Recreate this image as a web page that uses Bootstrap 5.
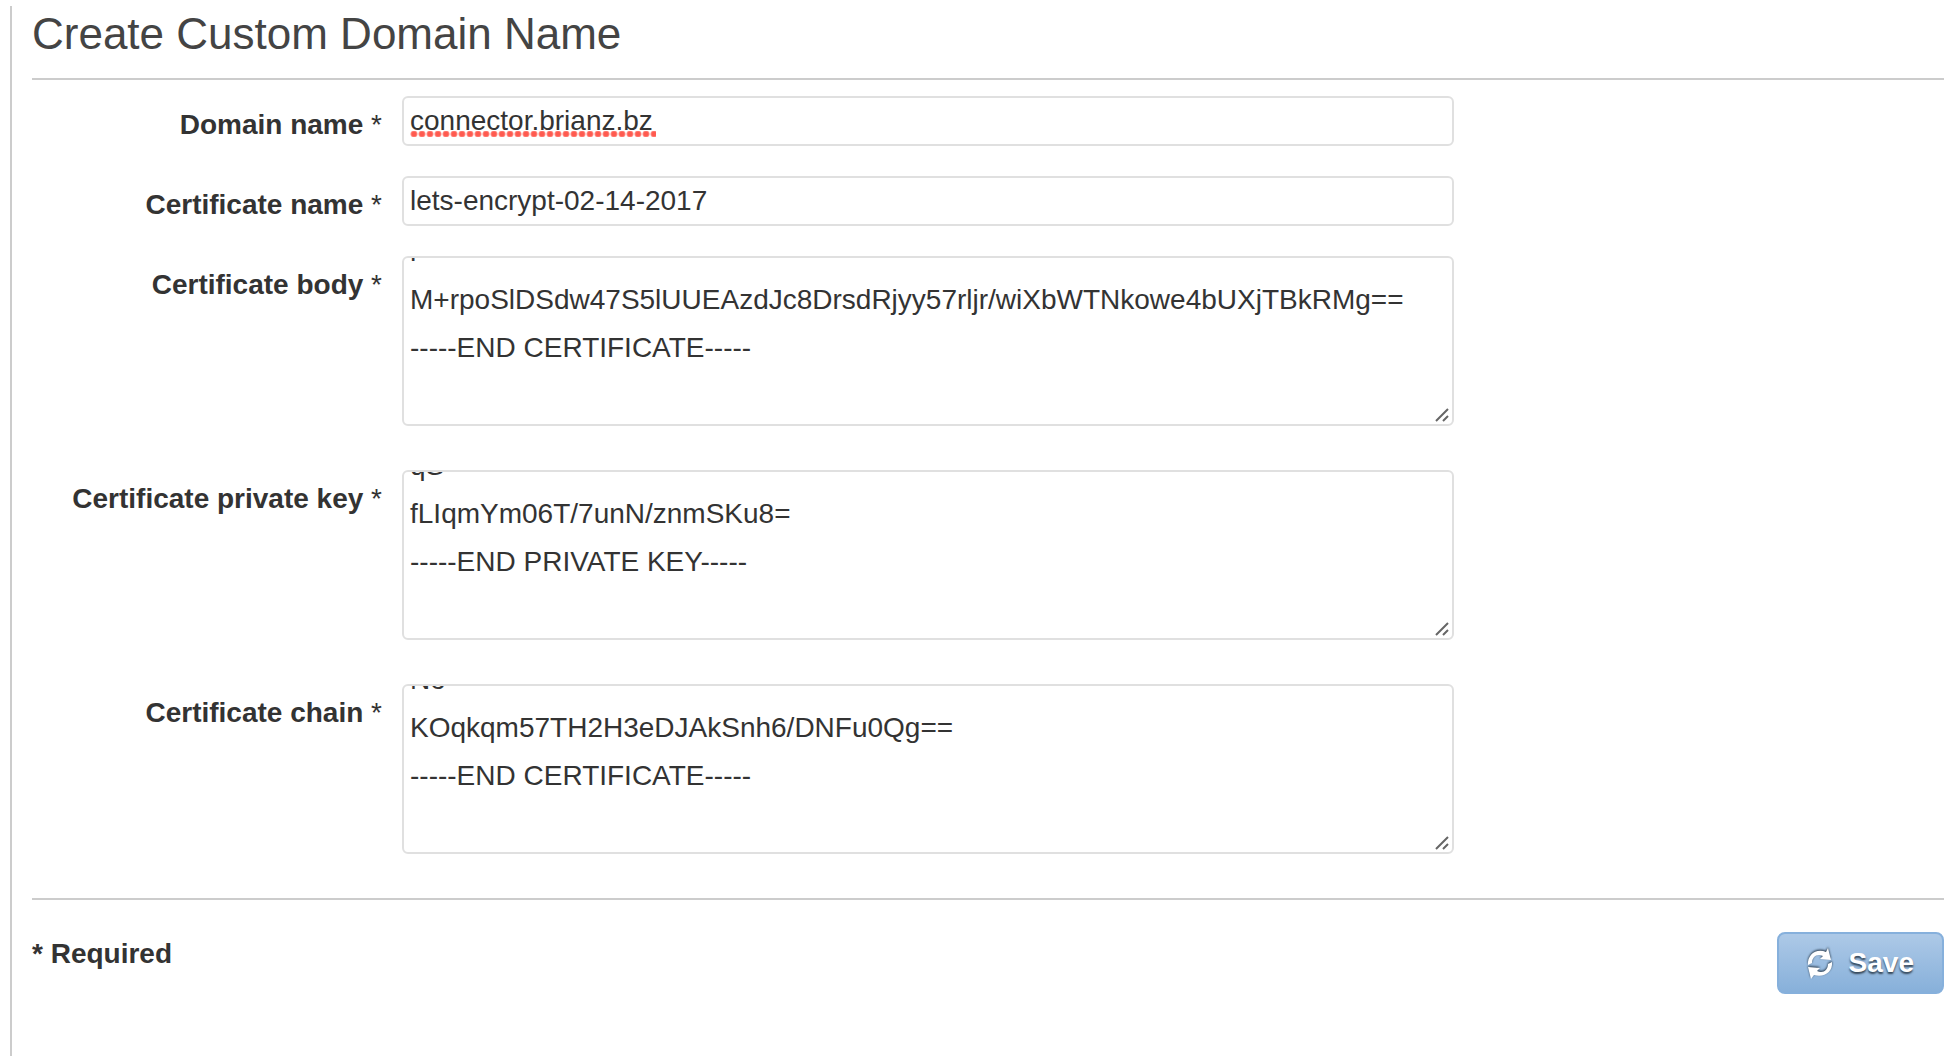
<!DOCTYPE html>
<html lang="en">
<head>
<meta charset="utf-8">
<meta name="viewport" content="width=device-width, initial-scale=1">
<title>Create Custom Domain Name</title>
<link href="https://cdn.jsdelivr.net/npm/bootstrap@5.3.0/dist/css/bootstrap.min.css" rel="stylesheet">
<style>
  body { font-family: "Liberation Sans", Arial, sans-serif; font-size: 28px; line-height: 48px; color: #333; background: #fff; }
  .panel-main { border-left: 2px solid #ccc; margin: 6px 12px 0 10px; padding-left: 20px; min-height: calc(100vh - 6px); }
  .panel-title { font-size: 44px; line-height: 56px; color: #444; padding-bottom: 16px; border-bottom: 2px solid #ccc; }
  .field-row { display: grid; grid-template-columns: 350px minmax(0, 55%); column-gap: 20px; margin-bottom: 30px; }
  .area-row { margin-bottom: 44px; }
  .field-label { font-weight: 700; text-align: right; line-height: 42px; padding-top: 8px; }
  .field-label span { font-weight: 400; }
  .field-box.form-control { font-size: 28px; line-height: 48px; color: #333; border: 2px solid #e0e0e0; border-radius: 6px; padding: 4px 6px; }
  input.field-box.form-control { height: 50px; padding-top: 0; padding-bottom: 0; line-height: 40px; }
  textarea.field-box.form-control { height: 170px; overflow: hidden; resize: none; }
  /* dotted spelling underline below the host name */
  input.field-box.misspelt {
    background-image: linear-gradient(#fff, #fff), radial-gradient(circle at 4px 3px, #ff5a4f 2px, #ff8b83 3px, transparent 4px);
    background-repeat: no-repeat, repeat-x;
    background-size: 100% 100%, 8px 6px;
    background-position: 252px 0, 6px 33px;
    background-clip: content-box;
  }
  .grip { right: 5px; bottom: 4px; width: 14px; height: 14px; }
  .panel-foot { border-top: 2px solid #ccc; padding-top: 32px; }
  .required-note { line-height: 44px; }
  .btn-save { font-size: 28px; font-weight: 700; line-height: 58px; color: #fff; padding: 0 28px; border: 2px solid #86b0dc; border-radius: 8px; background: linear-gradient(#adc9e7, #87b0da); text-shadow: 0 2px 2px #345; gap: 16px; }
  .btn-save svg { width: 26px; height: 32px; overflow: visible; filter: drop-shadow(0 -1px 1px #234); }
</style>
</head>
<body>
<main class="panel-main">
  <h1 class="panel-title fw-normal mb-0">Create Custom Domain Name</h1>
  <form>
    <div class="d-flex flex-column pt-3">
      <div class="field-row">
        <label class="field-label" for="domain">Domain name <span>*</span></label>
        <input class="form-control field-box misspelt" id="domain" type="text" value="connector.brianz.bz" spellcheck="false" required>
      </div>
      <div class="field-row">
        <label class="field-label" for="certname">Certificate name <span>*</span></label>
        <input class="form-control field-box" id="certname" type="text" value="lets-encrypt-02-14-2017" spellcheck="false" required>
      </div>
      <div class="field-row area-row">
        <label class="field-label" for="certbody">Certificate body <span>*</span></label>
        <div class="position-relative">
          <textarea class="form-control field-box" id="certbody" spellcheck="false" required>r
M+rpoSlDSdw47S5lUUEAzdJc8DrsdRjyy57rljr/wiXbWTNkowe4bUXjTBkRMg==
-----END CERTIFICATE-----
</textarea>
          <svg class="grip position-absolute" viewBox="0 0 14 14" aria-hidden="true"><path d="M1 13 13 1M8 13l5-5" stroke="#666" stroke-width="2" fill="none"/></svg>
        </div>
      </div>
      <div class="field-row area-row">
        <label class="field-label" for="certkey">Certificate private key <span>*</span></label>
        <div class="position-relative">
          <textarea class="form-control field-box" id="certkey" spellcheck="false" required>qS
fLIqmYm06T/7unN/znmSKu8=
-----END PRIVATE KEY-----
</textarea>
          <svg class="grip position-absolute" viewBox="0 0 14 14" aria-hidden="true"><path d="M1 13 13 1M8 13l5-5" stroke="#666" stroke-width="2" fill="none"/></svg>
        </div>
      </div>
      <div class="field-row area-row">
        <label class="field-label" for="certchain">Certificate chain <span>*</span></label>
        <div class="position-relative">
          <textarea class="form-control field-box" id="certchain" spellcheck="false" required>No
KOqkqm57TH2H3eDJAkSnh6/DNFu0Qg==
-----END CERTIFICATE-----
</textarea>
          <svg class="grip position-absolute" viewBox="0 0 14 14" aria-hidden="true"><path d="M1 13 13 1M8 13l5-5" stroke="#666" stroke-width="2" fill="none"/></svg>
        </div>
      </div>
    </div>
    <div class="panel-foot d-flex justify-content-between align-items-start">
      <strong class="required-note">* Required</strong>
      <button class="btn btn-save d-flex align-items-center" type="submit">
        <svg viewBox="0 0 26 32" aria-hidden="true" fill="#fff"><path d="M1 18C0 8 9 1 19 5L21 1 24 13 13 12 16 9C10 6 5 10 5 16Z"/><path d="M25 15C26 25 17 31 7 28L4 32 1 20 13 21 10 24C16 27 21 23 21 17Z"/></svg>
        Save
      </button>
    </div>
  </form>
</main>
<script src="https://cdn.jsdelivr.net/npm/bootstrap@5.3.0/dist/js/bootstrap.bundle.min.js"></script>
<script>
  // Each box opens at the end of its pasted text
  document.querySelectorAll('textarea').forEach(function (t) { t.scrollTop = t.scrollHeight; });
</script>
</body>
</html>
